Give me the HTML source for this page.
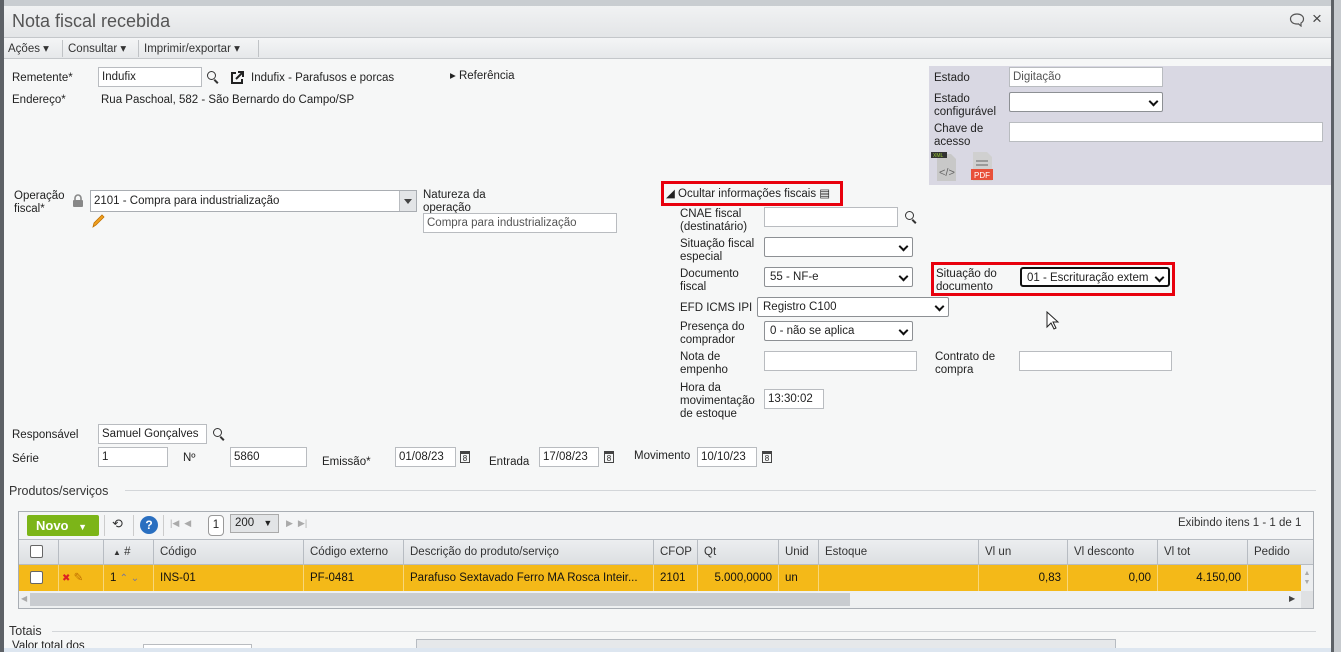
<!DOCTYPE html>
<html><head><meta charset="utf-8"><style>
*{box-sizing:border-box;margin:0;padding:0}
html{width:1341px;height:652px;overflow:hidden}
body{width:1341px;height:652px;overflow:hidden;background:#f6f7f7;font-family:"Liberation Sans",sans-serif;font-size:11.5px;color:#222;position:relative}
.a{position:absolute;white-space:nowrap}
.i{position:absolute;background:#fff;border:1px solid #b9bcc0;padding:1px 3px;line-height:16px;font-size:11.5px;white-space:nowrap;overflow:hidden}
.s{position:absolute;background:#fff;border:1px solid #8d9094;border-radius:2px;padding:1px 5px;line-height:16px;white-space:nowrap;overflow:hidden}
.s:after{content:"";position:absolute;right:5px;top:5px;width:5px;height:5px;border-right:2px solid #111;border-bottom:2px solid #111;transform:rotate(45deg)}
.l{position:absolute;line-height:13px;white-space:nowrap;margin-top:1px}
.mag{position:absolute;width:9px;height:9px;border:1.5px solid #333;border-radius:50%}
.mag:after{content:"";position:absolute;left:7px;top:7px;width:5px;height:1.5px;background:#333;transform:rotate(45deg);transform-origin:0 0}
.cal{position:absolute;width:10px;height:12px;border:1px solid #444;font-size:8px;line-height:9px;text-align:center;border-top-width:3px}
.th{position:absolute;top:539px;height:26px;line-height:26px;padding-left:6px;border-left:1px solid #b7bcc2;color:#333}
.td{position:absolute;top:565px;height:26px;line-height:26px;padding:0 6px;border-left:1px solid #f8d77a;color:#111}
</style></head><body>
<div class="a" style="left:0;top:0;width:1341px;height:6px;background:#c9cdd1"></div>
<div class="a" style="left:0;top:0;width:4px;height:652px;background:#5d6166"></div>
<div class="a" style="left:1331px;top:0;width:10px;height:652px;background:#c7cbcf;border-left:3px solid #5d6166"></div>
<div class="a" style="left:4px;top:6px;width:1327px;height:32px;background:linear-gradient(#f1f2f3,#e3e5e7);border-bottom:1px solid #c4c7ca"></div>
<div class="a" style="left:12px;top:11px;font-size:18px;color:#555">Nota fiscal recebida</div>
<svg class="a" style="left:1289px;top:13px" width="16" height="14" viewBox="0 0 16 14"><path d="M8 1C4 1 1.5 3.2 1.5 6s2.5 5 6.5 5c.6 0 1 0 1.5-.1L12 13v-3c1.7-.9 2.5-2.3 2.5-4 0-2.8-2.5-5-6.5-5z" fill="none" stroke="#555" stroke-width="1.2"/></svg>
<div class="a" style="left:1312px;top:9px;font-size:17px;color:#444">×</div>
<div class="a" style="left:4px;top:38px;width:1327px;height:21px;background:linear-gradient(#f4f5f6,#e6e8ea);border-bottom:1px solid #c4c7ca"></div>
<div class="a" style="left:8px;top:39px;height:21px;line-height:21px;color:#333">Ações ▾</div>
<div class="a" style="left:62px;top:40px;height:17px;border-left:1px solid #c0c3c6"></div>
<div class="a" style="left:68px;top:39px;height:21px;line-height:21px;color:#333">Consultar ▾</div>
<div class="a" style="left:138px;top:40px;height:17px;border-left:1px solid #c0c3c6"></div>
<div class="a" style="left:144px;top:39px;height:21px;line-height:21px;color:#333">Imprimir/exportar ▾</div>
<div class="a" style="left:258px;top:40px;height:17px;border-left:1px solid #c0c3c6"></div>

<div class="l" style="left:12px;top:71px">Remetente*</div>
<div class="i" style="left:98px;top:67px;width:104px;height:20px">Indufix</div>
<div class="mag" style="left:207px;top:71px"></div>
<svg class="a" style="left:229px;top:70px" width="16" height="16" viewBox="0 0 16 16"><path d="M7 3H3v10h10V9" fill="none" stroke="#222" stroke-width="2"/><path d="M9 2h5v5M14 2L7 9" fill="none" stroke="#222" stroke-width="2"/></svg>
<div class="l" style="left:251px;top:71px">Indufix - Parafusos e porcas</div>
<div class="l" style="left:450px;top:69px">▸ Referência</div>
<div class="l" style="left:12px;top:93px">Endereço*</div>
<div class="l" style="left:101px;top:93px">Rua Paschoal, 582 - São Bernardo do Campo/SP</div>

<div class="a" style="left:929px;top:66px;width:402px;height:119px;background:#d9d8e3"></div>
<div class="l" style="left:934px;top:71px">Estado</div>
<div class="i" style="left:1009px;top:67px;width:154px;height:20px;color:#555">Digitação</div>
<div class="l" style="left:934px;top:92px">Estado<br>configurável</div>
<div class="s" style="left:1009px;top:92px;width:154px;height:20px"></div>
<div class="l" style="left:934px;top:122px">Chave de<br>acesso</div>
<div class="i" style="left:1009px;top:122px;width:314px;height:20px"></div>
<svg class="a" style="left:931px;top:152px" width="30" height="29" viewBox="0 0 30 29"><path d="M6 2h14l5 5v22H6z" fill="#c8c8c8"/><rect x="0" y="0" width="16" height="6" fill="#333"/><text x="2" y="5" font-size="5" fill="#9c3" font-family="Liberation Sans">XML</text><text x="8" y="24" font-size="11" fill="#666" font-family="Liberation Sans">&lt;/&gt;</text></svg>
<svg class="a" style="left:970px;top:152px" width="24" height="29" viewBox="0 0 24 29"><path d="M3 0h14l5 5v24H3z" fill="#d0d0d0"/><path d="M6 9h12M6 13h12" stroke="#888" stroke-width="1.5"/><rect x="1" y="17" width="22" height="11" fill="#e8503a"/><text x="4" y="26" font-size="8" fill="#fff" font-family="Liberation Sans">PDF</text></svg>

<div class="l" style="left:14px;top:189px">Operação<br>fiscal*</div>
<svg class="a" style="left:72px;top:194px" width="12" height="13" viewBox="0 0 12 13"><path d="M3 6V4a3 3 0 016 0v2" fill="none" stroke="#888" stroke-width="1.6"/><rect x="1" y="6" width="10" height="7" rx="1" fill="#888"/></svg>
<div class="i" style="left:90px;top:190px;width:327px;height:22px;line-height:18px;border-color:#a9adb2">2101 - Compra para industrialização</div>
<div class="a" style="left:399px;top:191px;width:17px;height:20px;background:#e3e5e7;border-left:1px solid #b9bcc0"></div>
<div class="a" style="left:404px;top:199px;border:4px solid transparent;border-top:5px solid #444"></div>
<svg class="a" style="left:91px;top:213px" width="14" height="16" viewBox="0 0 14 16"><path d="M2 14l1-4 8-8 2 2-8 8z" fill="#f0a020" stroke="#c07000" stroke-width=".8"/></svg>
<div class="l" style="left:423px;top:188px">Natureza da<br>operação</div>
<div class="i" style="left:423px;top:213px;width:194px;height:20px;color:#555">Compra para industrialização</div>

<div class="a" style="left:661px;top:181px;width:182px;height:25px;border:3px solid #e8000d"></div>
<div class="l" style="left:666px;top:187px">◢ Ocultar informações fiscais ▤</div>
<div class="l" style="left:680px;top:207px">CNAE fiscal<br>(destinatário)</div>
<div class="i" style="left:764px;top:207px;width:134px;height:20px"></div>
<div class="mag" style="left:905px;top:211px"></div>
<div class="l" style="left:680px;top:237px">Situação fiscal<br>especial</div>
<div class="s" style="left:764px;top:237px;width:149px;height:20px"></div>
<div class="l" style="left:680px;top:267px">Documento<br>fiscal</div>
<div class="s" style="left:764px;top:267px;width:149px;height:20px">55 - NF-e</div>
<div class="a" style="left:931px;top:262px;width:244px;height:34px;border:3px solid #e8000d"></div>
<div class="l" style="left:936px;top:267px">Situação do<br>documento</div>
<div class="s" style="left:1020px;top:267px;width:150px;height:20px;border:2px solid #111;border-radius:3px;padding-right:16px">01 - Escrituração extem</div>
<div class="l" style="left:680px;top:301px">EFD ICMS IPI</div>
<div class="s" style="left:757px;top:297px;width:192px;height:20px">Registro C100</div>
<div class="l" style="left:680px;top:320px">Presença do<br>comprador</div>
<div class="s" style="left:764px;top:321px;width:149px;height:20px">0 - não se aplica</div>
<div class="l" style="left:680px;top:350px">Nota de<br>empenho</div>
<div class="i" style="left:764px;top:351px;width:153px;height:20px"></div>
<div class="l" style="left:935px;top:350px">Contrato de<br>compra</div>
<div class="i" style="left:1019px;top:351px;width:153px;height:20px"></div>
<div class="l" style="left:680px;top:381px">Hora da<br>movimentação<br>de estoque</div>
<div class="i" style="left:764px;top:389px;width:60px;height:20px">13:30:02</div>
<svg class="a" style="left:1046px;top:311px" width="14" height="20" viewBox="0 0 14 20"><path d="M1 1v15l4-4 3 6 2-1-3-6h5z" fill="#fff" stroke="#222"/></svg>

<div class="l" style="left:12px;top:428px">Responsável</div>
<div class="i" style="left:98px;top:424px;width:109px;height:20px">Samuel Gonçalves</div>
<div class="mag" style="left:213px;top:428px"></div>
<div class="l" style="left:12px;top:452px">Série</div>
<div class="i" style="left:98px;top:447px;width:70px;height:20px">1</div>
<div class="l" style="left:183px;top:451px">Nº</div>
<div class="i" style="left:230px;top:447px;width:77px;height:20px">5860</div>
<div class="l" style="left:322px;top:455px">Emissão*</div>
<div class="i" style="left:395px;top:447px;width:61px;height:20px">01/08/23</div>
<div class="cal" style="left:460px;top:451px">8</div>
<div class="l" style="left:489px;top:455px">Entrada</div>
<div class="i" style="left:539px;top:447px;width:60px;height:20px">17/08/23</div>
<div class="cal" style="left:604px;top:451px">8</div>
<div class="l" style="left:634px;top:449px">Movimento</div>
<div class="i" style="left:697px;top:447px;width:60px;height:20px">10/10/23</div>
<div class="cal" style="left:762px;top:451px">8</div>

<div class="a" style="left:125px;top:490px;width:1191px;border-top:1px solid #d3d6d9"></div>
<div class="l" style="left:9px;top:484px;font-size:12.5px;color:#333">Produtos/serviços</div>

<div class="a" style="left:18px;top:511px;width:1296px;height:98px;border:1px solid #a9aeb4;background:#f4f5f6"></div>
<div class="a" style="left:27px;top:515px;width:72px;height:21px;background:#7cb518;border-radius:2px;color:#fff;font-weight:bold;font-size:13px;line-height:21px;padding-left:9px">Novo <span style="font-size:9px;margin-left:6px">▼</span></div>
<div class="a" style="left:104px;top:515px;height:21px;border-left:1px solid #ccc"></div>
<div class="a" style="left:112px;top:516px;font-size:13px;color:#333">⟲</div>
<div class="a" style="left:133px;top:515px;height:21px;border-left:1px solid #ccc"></div>
<div class="a" style="left:140px;top:516px;width:18px;height:18px;border-radius:50%;background:#2a6fc0;color:#fff;font-weight:bold;text-align:center;line-height:18px;font-size:12px">?</div>
<div class="a" style="left:163px;top:515px;height:21px;border-left:1px solid #ccc"></div>
<div class="a" style="left:170px;top:518px;color:#aaa;font-size:9px">|◀ &nbsp;◀</div>
<div class="a" style="left:208px;top:515px;width:16px;height:21px;border:1px solid #999;border-radius:4px;background:#fff;text-align:center;line-height:19px">1</div>
<div class="a" style="left:230px;top:514px;width:49px;height:19px;border:1px solid #aaa;background:#e2e4e6;padding-left:4px;line-height:17px">200 <span style="font-size:9px;margin-left:6px">▼</span></div>
<div class="a" style="left:286px;top:518px;color:#aaa;font-size:9px">▶ &nbsp;▶|</div>
<div class="a" style="left:1178px;top:517px;color:#333">Exibindo itens 1 - 1 de 1</div>

<div class="a" style="left:19px;top:539px;width:1294px;height:26px;background:linear-gradient(#eceef0,#dcdfe2);border-top:1px solid #b7bcc2;border-bottom:1px solid #b7bcc2"></div>
<div class="th" style="left:19px;width:39px;border:0"><span style="display:inline-block;width:13px;height:13px;border:1px solid #666;border-radius:2px;background:#fff;margin:6px 0 0 5px;vertical-align:top"></span></div>
<div class="th" style="left:58px;width:45px"></div>
<div class="th" style="left:103px;width:50px;padding-left:9px"><span style="font-size:8px">▲</span> #</div>
<div class="th" style="left:153px;width:150px">Código</div>
<div class="th" style="left:303px;width:100px">Código externo</div>
<div class="th" style="left:403px;width:250px">Descrição do produto/serviço</div>
<div class="th" style="left:653px;width:44px">CFOP</div>
<div class="th" style="left:697px;width:81px">Qt</div>
<div class="th" style="left:778px;width:40px">Unid</div>
<div class="th" style="left:818px;width:160px">Estoque</div>
<div class="th" style="left:978px;width:89px">Vl un</div>
<div class="th" style="left:1067px;width:90px">Vl desconto</div>
<div class="th" style="left:1157px;width:90px">Vl tot</div>
<div class="th" style="left:1247px;width:54px;overflow:hidden">Pedido de</div>

<div class="a" style="left:19px;top:565px;width:1282px;height:26px;background:#f4b918"></div>
<div class="td" style="left:19px;width:39px;border:0"><span style="display:inline-block;width:13px;height:13px;border:1px solid #666;border-radius:2px;background:#fff;margin:6px 0 0 5px;vertical-align:top"></span></div>
<div class="td" style="left:58px;width:45px;padding-left:3px"><span style="color:#d22;font-size:10px">✖</span> <span style="color:#c07000">✎</span></div>
<div class="td" style="left:103px;width:50px">1 <span style="color:#779;font-size:10px">⌃ ⌄</span></div>
<div class="td" style="left:153px;width:150px">INS-01</div>
<div class="td" style="left:303px;width:100px">PF-0481</div>
<div class="td" style="left:403px;width:250px">Parafuso Sextavado Ferro MA Rosca Inteir...</div>
<div class="td" style="left:653px;width:44px">2101</div>
<div class="td" style="left:697px;width:81px;text-align:right">5.000,0000</div>
<div class="td" style="left:778px;width:40px">un</div>
<div class="td" style="left:818px;width:160px"></div>
<div class="td" style="left:978px;width:89px;text-align:right">0,83</div>
<div class="td" style="left:1067px;width:90px;text-align:right">0,00</div>
<div class="td" style="left:1157px;width:90px;text-align:right">4.150,00</div>
<div class="td" style="left:1247px;width:54px"></div>
<div class="a" style="left:1301px;top:565px;width:12px;height:26px;background:#eceef0;color:#aaa;font-size:7px;line-height:9px;text-align:center;padding-top:4px">▲<br>▼</div>
<div class="a" style="left:19px;top:591px;width:1294px;height:17px;background:#eef0f1"></div>
<div class="a" style="left:30px;top:593px;width:820px;height:13px;background:#c9ccd0"></div>
<div class="a" style="left:21px;top:594px;color:#aaa;font-size:8px">◀</div>
<div class="a" style="left:1289px;top:594px;color:#444;font-size:8px">▶</div>
<div class="a" style="left:1301px;top:591px;width:12px;height:17px;background:#dfe1e3"></div>

<div class="a" style="left:52px;top:631px;width:1264px;border-top:1px solid #d3d6d9"></div>
<div class="l" style="left:9px;top:624px;font-size:12.5px;color:#333">Totais</div>
<div class="a" style="left:12px;top:640px;height:8px;overflow:hidden;line-height:13px">Valor total dos</div>
<div class="a" style="left:143px;top:644px;width:109px;height:4px;background:#fff;border:1px solid #b9bcc0;border-bottom:0"></div>
<div class="a" style="left:416px;top:639px;width:700px;height:9px;background:#e6e8ea;border:1px solid #b7bcc2;border-bottom:0"></div>
<div class="a" style="left:4px;top:648px;width:1327px;height:4px;background:#dde6f0"></div>
</body></html>
